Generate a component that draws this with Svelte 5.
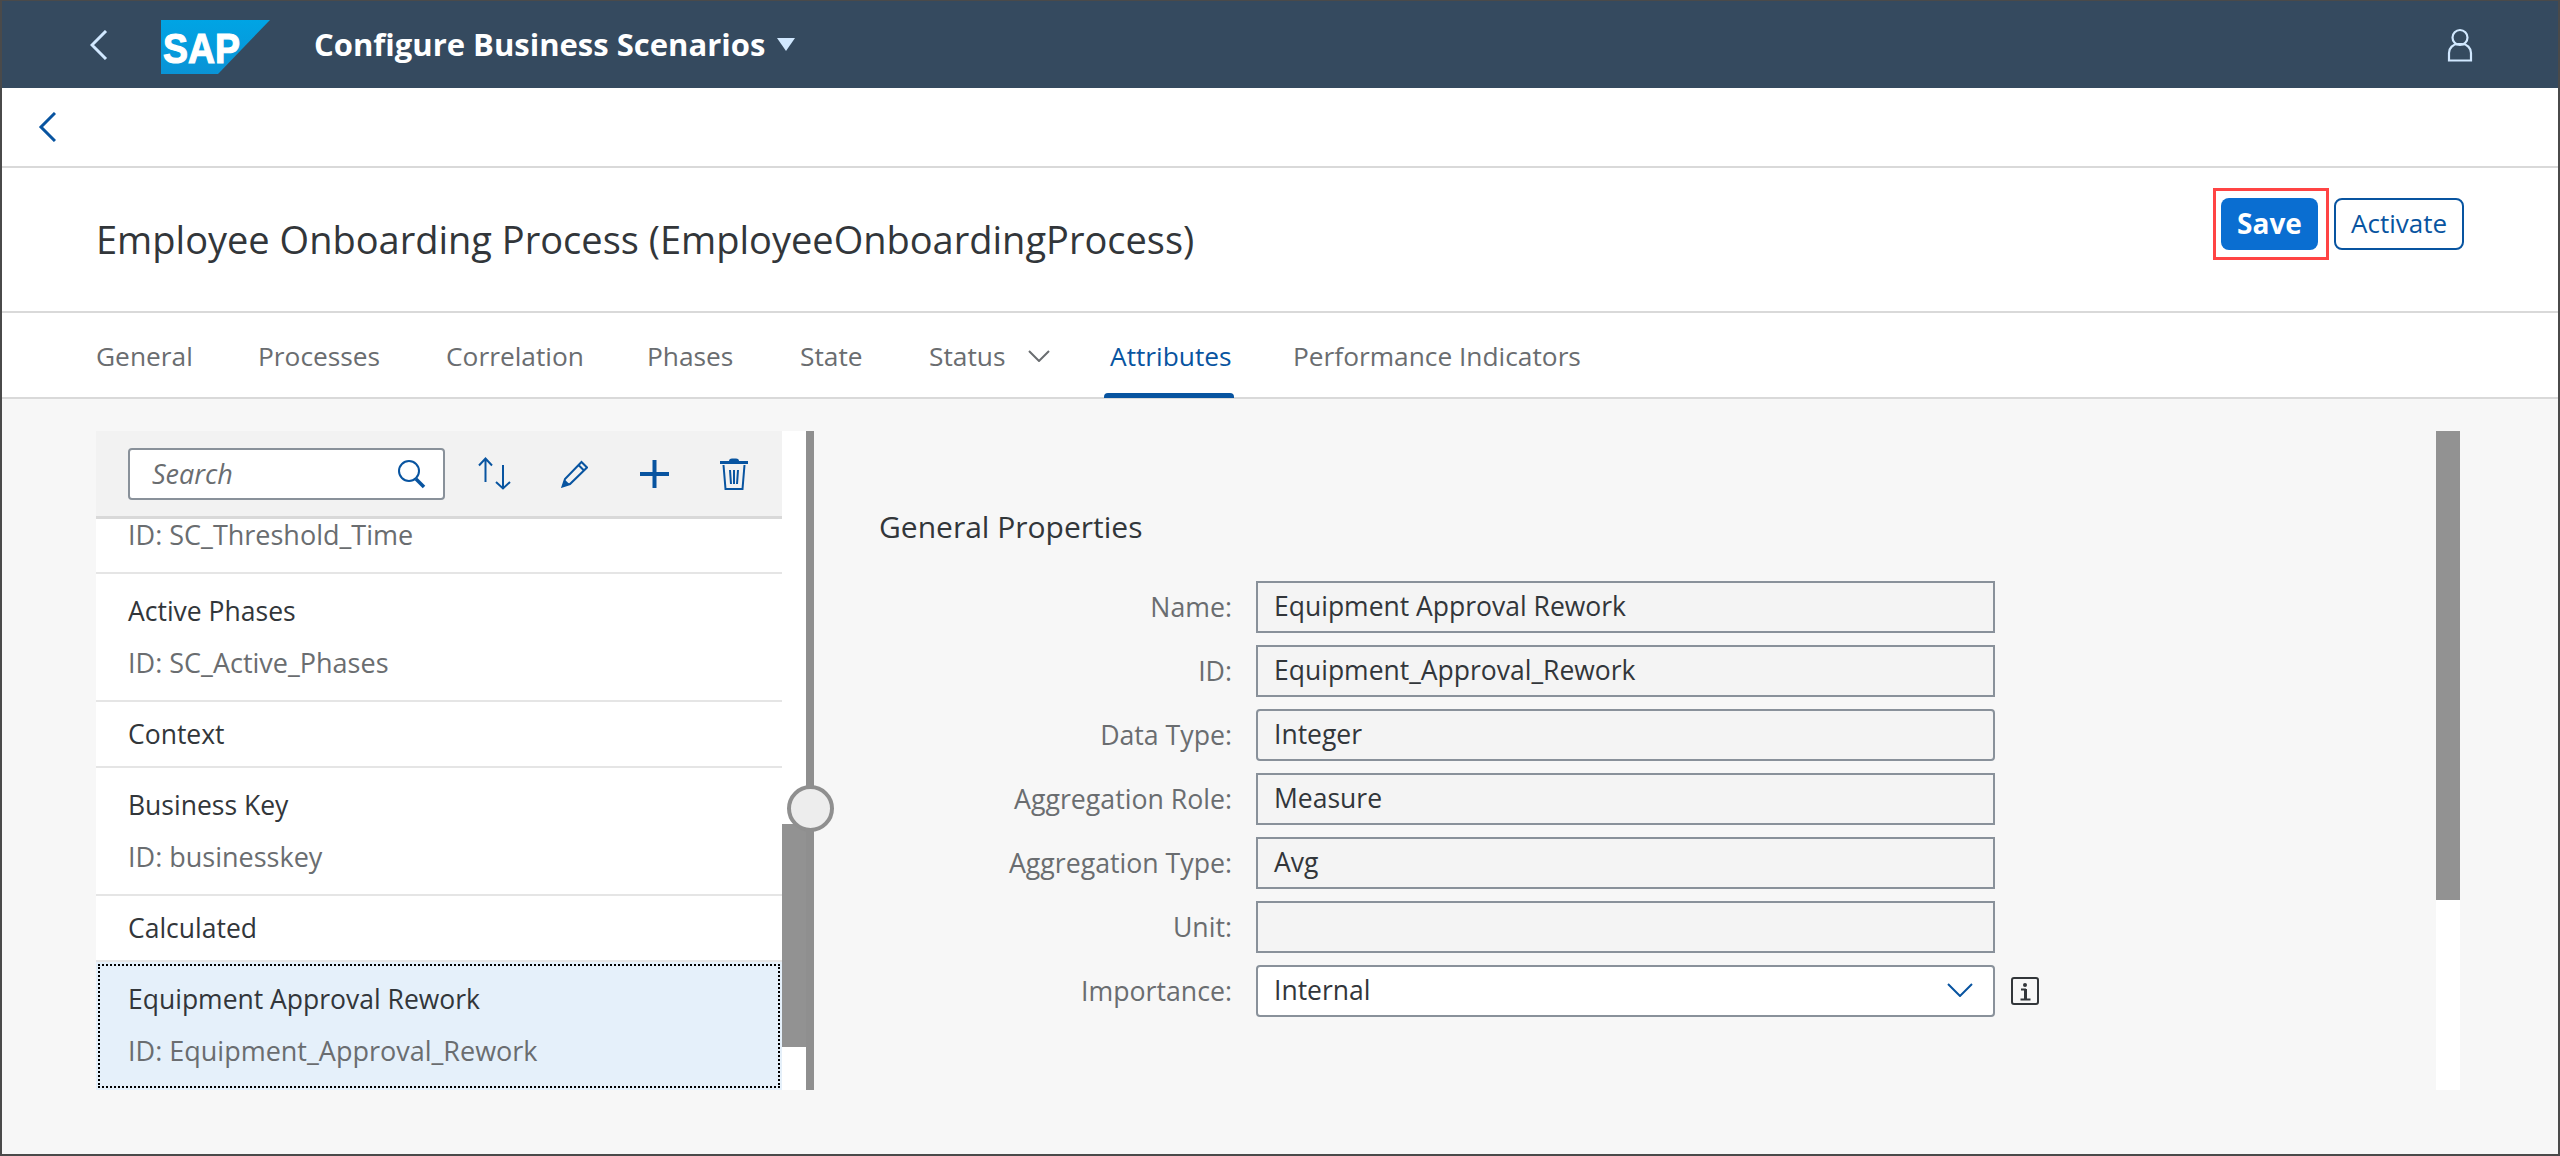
<script lang="ts">
  const tabs = [
    { label: 'General', width: 162 },
    { label: 'Processes', width: 188 },
    { label: 'Correlation', width: 201 },
    { label: 'Phases', width: 153 },
    { label: 'State', width: 129 },
    { label: 'Status', width: 181, arrow: true },
    { label: 'Attributes', width: 183, active: true },
    { label: 'Performance Indicators', width: 300 },
  ]

  const items = [
    { title: 'Active Phases', id: 'SC_Active_Phases' },
    { title: 'Context' },
    { title: 'Business Key', id: 'businesskey' },
    { title: 'Calculated' },
    { title: 'Equipment Approval Rework', id: 'Equipment_Approval_Rework', selected: true },
  ]

  const fields = [
    { label: 'Name:', value: 'Equipment Approval Rework' },
    { label: 'ID:', value: 'Equipment_Approval_Rework' },
    { label: 'Data Type:', value: 'Integer', rounded: true },
    { label: 'Aggregation Role:', value: 'Measure' },
    { label: 'Aggregation Type:', value: 'Avg' },
    { label: 'Unit:', value: '' },
  ]
</script>

<div class="page">
  <header class="shell">
    <svg class="shell-back" viewBox="0 0 18 30" width="18" height="30"><path d="M16 1 2 15l14 14" /></svg>
    <svg class="logo" viewBox="0 0 110 54" width="110" height="54">
      <defs>
        <linearGradient id="sapblue" x1="0" y1="0" x2="0" y2="1">
          <stop offset="0" stop-color="#00a4e4" />
          <stop offset="1" stop-color="#0a93d6" />
        </linearGradient>
      </defs>
      <polygon points="0,0 109,0 57,54 0,54" fill="url(#sapblue)" />
      <text x="2" y="43" textLength="77" lengthAdjust="spacingAndGlyphs">SAP</text>
    </svg>
    <span class="app-title">Configure Business Scenarios</span>
    <span class="app-caret"></span>
    <svg class="user" viewBox="0 0 26 34" width="26" height="34">
      <circle cx="13" cy="9.5" r="7.5" />
      <path d="M2 32.5V25a9 9 0 0 1 9-9h4a9 9 0 0 1 9 9v7.5z" />
    </svg>
  </header>

  <div class="nav-row">
    <svg class="nav-back" viewBox="0 0 18 30" width="18" height="30"><path d="M17 1 3 15l14 14" /></svg>
  </div>

  <div class="title-row">
    <h1>Employee Onboarding Process (EmployeeOnboardingProcess)</h1>
    <div class="actions">
      <span class="highlight"><button class="save">Save</button></span>
      <button class="activate">Activate</button>
    </div>
  </div>

  <nav class="tabs">
    {#each tabs as tab}
      <div class="tab" class:active={tab.active} style="width: {tab.width}px">
        <span>{tab.label}</span>
        {#if tab.arrow}
          <svg viewBox="0 0 22 12" width="22" height="12"><path d="M1 1l10 10L21 1" /></svg>
        {/if}
      </div>
    {/each}
  </nav>

  <main class="content">
    <section class="master">
      <div class="toolbar">
        <div class="search">
          <span>Search</span>
          <svg viewBox="0 0 30 30" width="30" height="30">
            <circle cx="12" cy="12" r="10" />
            <path d="M19 20l8 8" class="thick" />
          </svg>
        </div>
        <svg class="tool sort" viewBox="0 0 33 33" width="33" height="33">
          <path d="M7.5 25V1.5M1 8.5l6.5-7 6.5 7M25 8v23.5M18 25l7 6.5 7-6.5" />
        </svg>
        <svg class="tool pencil" viewBox="0 0 27 28" width="27" height="28">
          <path d="M1.5 26.5 4 19 20.5 2l5.5 5.5L9 24zM17.5 5l5.5 5.5" />
          <path class="tip" d="M1 27l2.5-7.5 5 4.5z" />
        </svg>
        <svg class="tool plus" viewBox="0 0 29 28" width="29" height="28">
          <path d="M14.5 0v28M0 14h29" />
        </svg>
        <svg class="tool trash" viewBox="0 0 28 32" width="28" height="32">
          <path class="lid" d="M0 4.5h28" />
          <path class="bump" d="M9 3q0-2.5 3-2.5h4q3 0 3 2.5z" />
          <path d="M3.5 7l2 24h17l2-24M10 12l1 14M14 12v14M18 12l-1 14" />
        </svg>
      </div>
      <div class="list-wrap">
        <div class="list">
          <div class="item partial"><div class="sub">ID: SC_Threshold_Time</div></div>
          {#each items as item}
            <div class="item" class:selected={item.selected} class:single={!item.id}>
              <div class="name">{item.title}</div>
              {#if item.id}<div class="sub">ID: {item.id}</div>{/if}
            </div>
          {/each}
        </div>
        <div class="list-scroll"><div class="list-thumb"></div></div>
      </div>
    </section>

    <div class="splitter"><div class="handle"></div></div>

    <section class="detail">
      <h2>General Properties</h2>
      <div class="form">
        {#each fields as field}
          <div class="row">
            <label>{field.label}</label>
            <div class="input" class:rounded={field.rounded}>{field.value}</div>
          </div>
        {/each}
        <div class="row">
          <label>Importance:</label>
          <div class="input select">
            Internal
            <svg viewBox="0 0 26 14" width="26" height="14"><path d="M1 1l12 12L25 1" /></svg>
          </div>
          <svg class="info" viewBox="0 0 28 28" width="28" height="28">
            <rect x="1" y="1" width="26" height="26" rx="2" />
            <circle cx="14" cy="8" r="2" />
            <path class="stem" d="M14.5 12v10" />
            <path d="M10 12.5h5M9.5 22.5h10" />
          </svg>
        </div>
      </div>
    </section>

    <div class="detail-scroll"><div class="detail-thumb"></div></div>
  </main>
</div>

<style>
  :global(body) {
    margin: 0;
    background: #f7f7f7;
  }

  .page {
    height: 1156px;
    box-sizing: border-box;
    display: flex;
    flex-direction: column;
    border: solid #4a4a4a;
    border-width: 1px 2px 2px 2px;
    font-family: 'Open Sans', 'Noto Sans', sans-serif;
    color: #32363a;
    overflow: hidden;
  }

  svg {
    display: block;
    flex-shrink: 0;
    fill: none;
  }

  .shell {
    height: 87px;
    flex-shrink: 0;
    background: #354a5f;
    display: flex;
    align-items: center;
    padding-left: 88px;
  }

  .shell-back path {
    stroke: #d1e8ff;
    stroke-width: 3;
  }

  .logo {
    margin-left: 53px;
    margin-top: 5px;
  }

  .logo text {
    font-family: 'Liberation Sans', sans-serif;
    font-weight: 700;
    font-size: 42px;
    fill: #fff;
    stroke: #fff;
    stroke-width: 1.2;
  }

  .app-title {
    margin-left: 43px;
    margin-bottom: 2px;
    font-size: 31px;
    font-weight: 700;
    color: #fff;
  }

  .app-caret {
    margin-left: 12px;
    width: 0;
    height: 0;
    border: solid transparent;
    border-width: 13px 9px 0 9px;
    border-top-color: #d1e8ff;
  }

  .user {
    margin-left: auto;
    margin-right: 85px;
  }

  .user circle,
  .user path {
    stroke: #d1e8ff;
    stroke-width: 2.2;
  }

  .nav-row {
    height: 78px;
    flex-shrink: 0;
    background: #fff;
    border-bottom: 2px solid #d9d9d9;
    display: flex;
    align-items: center;
    padding-left: 36px;
  }

  .nav-back path {
    stroke: #0854a0;
    stroke-width: 3;
  }

  .title-row {
    height: 143px;
    flex-shrink: 0;
    background: #fff;
    border-bottom: 2px solid #d9d9d9;
    display: flex;
    justify-content: space-between;
    padding: 0 94px;
  }

  h1 {
    margin: 0;
    padding-top: 46px;
    font-size: 38px;
    line-height: 50px;
    font-weight: 400;
  }

  .actions {
    display: flex;
    align-items: flex-start;
    padding-top: 30px;
  }

  button {
    font-family: inherit;
    font-size: 28px;
    height: 52px;
    padding: 0 0 2px;
    box-sizing: border-box;
    border-radius: 8px;
  }

  .highlight {
    display: block;
    box-sizing: border-box;
    border: 3px solid #ff4444;
    padding: 7px 8px 7px 5px;
    margin-top: -10px;
    height: 72px;
    margin-right: 5px;
  }

  .save {
    display: block;
    width: 97px;
    background: #0a6ed1;
    border: 0;
    color: #fff;
    font-weight: 700;
  }

  .activate {
    width: 130px;
    background: #fff;
    border: 2px solid #0854a0;
    color: #0854a0;
    font-size: 26px;
  }

  .tabs {
    height: 84px;
    flex-shrink: 0;
    background: #fff;
    border-bottom: 2px solid #d9d9d9;
    display: flex;
    padding-left: 94px;
    font-size: 26.3px;
    color: #6a6d70;
  }

  .tab {
    display: flex;
    align-items: center;
    gap: 23px;
    box-sizing: border-box;
    border-bottom: 4px solid transparent;
    padding-top: 5px;
    flex-shrink: 0;
  }

  .tab svg path {
    stroke: #6a6d70;
    stroke-width: 2;
  }

  .tab.active {
    color: #0854a0;
    position: relative;
  }

  .tab.active::after {
    content: '';
    position: absolute;
    left: -6px;
    width: 130px;
    bottom: -5px;
    height: 5px;
    border-radius: 4px 4px 0 0;
    background: #0854a0;
  }

  .content {
    flex: 1;
    display: flex;
    align-items: flex-start;
    padding: 32px 0 0 94px;
    background: #f7f7f7;
  }

  .master {
    width: 710px;
    height: 659px;
    flex-shrink: 0;
    display: flex;
    flex-direction: column;
    background: #fff;
  }

  .toolbar {
    height: 85px;
    flex-shrink: 0;
    margin-right: 24px;
    background: #f2f2f2;
    border-bottom: 3px solid #d9d9d9;
    display: flex;
    align-items: center;
    padding-left: 32px;
  }

  .search {
    box-sizing: border-box;
    width: 317px;
    height: 52px;
    background: #fff;
    border: 2px solid #89919a;
    border-radius: 4px;
    display: flex;
    align-items: center;
    justify-content: space-between;
    padding: 0 16px 0 22px;
    font-size: 27px;
    font-style: italic;
    color: #6a6d70;
  }

  .search svg circle,
  .search svg path {
    stroke: #0854a0;
    stroke-width: 2;
  }

  .search svg .thick {
    stroke-width: 3.5;
  }

  .tool path {
    stroke: #0854a0;
    stroke-width: 2;
  }

  .sort {
    margin-left: 33px;
  }

  .pencil {
    margin-left: 50px;
  }

  .pencil .tip {
    fill: #0854a0;
    stroke: none;
  }

  .tool.plus {
    margin-left: 52px;
  }

  .tool.plus path {
    stroke-width: 4;
  }

  .trash {
    margin-left: 51px;
  }

  .trash .lid {
    stroke-width: 3;
  }

  .trash .bump {
    fill: #0854a0;
    stroke: none;
  }

  .list-wrap {
    flex: 1;
    display: flex;
    min-height: 0;
  }

  .list {
    flex: 1;
  }

  .item {
    box-sizing: border-box;
    height: 128px;
    padding: 11px 32px;
    border-bottom: 2px solid #e5e5e5;
    font-size: 27px;
    line-height: 52px;
  }

  .name {
    font-size: 26.5px;
  }

  .item.single {
    height: 66px;
    padding-top: 6px;
    padding-bottom: 6px;
  }

  .item.partial {
    height: 55px;
    padding-top: 0;
  }

  .item.partial .sub {
    line-height: 32px;
  }

  .item.selected {
    background: #e5f0fa;
    border-bottom: 0;
    outline: 2px dotted #000;
    outline-offset: -4px;
  }

  .sub {
    color: #6a6d70;
  }

  .list-scroll {
    width: 24px;
    flex-shrink: 0;
    background: #fff;
  }

  .list-thumb {
    margin-top: 305px;
    height: 223px;
    background: #929292;
  }

  .splitter {
    width: 8px;
    height: 659px;
    flex-shrink: 0;
    background: #8f8f8f;
    position: relative;
  }

  .handle {
    position: absolute;
    left: -19.5px;
    top: 354px;
    width: 47px;
    height: 47px;
    box-sizing: border-box;
    border-radius: 50%;
    background: #ededed;
    border: 4px solid #8f8f8f;
  }

  .detail {
    flex: 1;
    padding-left: 65px;
  }

  h2 {
    margin: 0;
    padding-top: 75px;
    font-size: 30px;
    line-height: 42px;
    font-weight: 400;
  }

  .form {
    margin-top: 33px;
    display: flex;
    flex-direction: column;
    gap: 12px;
  }

  .row {
    display: flex;
    align-items: center;
    height: 52px;
  }

  label {
    width: 353px;
    padding-bottom: 2px;
    text-align: right;
    font-size: 26.7px;
    color: #6a6d70;
    flex-shrink: 0;
  }

  .input {
    box-sizing: border-box;
    width: 739px;
    height: 52px;
    margin-left: 24px;
    padding: 0 16px 2px;
    display: flex;
    align-items: center;
    justify-content: space-between;
    background: #f4f4f4;
    border: 2px solid #89919a;
    font-size: 26.5px;
  }

  .input.rounded {
    border-radius: 4px;
  }

  .input.select {
    background: #fff;
    border-radius: 4px;
    padding-right: 20px;
  }

  .select svg path {
    stroke: #0854a0;
    stroke-width: 2;
  }

  .info {
    margin-left: 16px;
  }

  .info rect,
  .info path {
    stroke: #32363a;
    stroke-width: 2;
  }

  .info .stem {
    stroke-width: 3;
  }

  .info circle {
    fill: #32363a;
  }

  .detail-scroll {
    width: 24px;
    height: 659px;
    flex-shrink: 0;
    margin-right: 98px;
    background: #fff;
  }

  .detail-thumb {
    height: 469px;
    background: #929292;
  }
</style>
